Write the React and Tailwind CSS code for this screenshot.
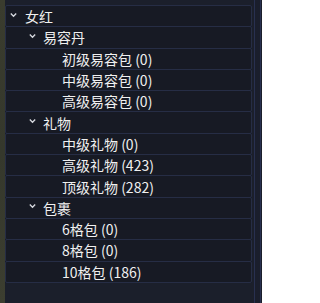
import React from "react";

const rows = [
  { level: 0, label: "女红" },
  { level: 1, label: "易容丹" },
  { level: 2, label: "初级易容包 (0)" },
  { level: 2, label: "中级易容包 (0)" },
  { level: 2, label: "高级易容包 (0)" },
  { level: 1, label: "礼物" },
  { level: 2, label: "中级礼物 (0)" },
  { level: 2, label: "高级礼物 (423)" },
  { level: 2, label: "顶级礼物 (282)" },
  { level: 1, label: "包裹" },
  { level: 2, label: "6格包 (0)" },
  { level: 2, label: "8格包 (0)" },
  { level: 2, label: "10格包 (186)" },
];

function Chevron() {
  return (
    <svg width="7" height="6" viewBox="0 0 7 6" className="shrink-0 -mt-[3px]">
      <path d="M0.8 1.5 L3.5 4.3 L6.2 1.5" fill="none" stroke="#d8dae0" strokeWidth="1.3" />
    </svg>
  );
}

export default function App() {
  return (
    <div
      className="w-[262px] h-[303px] flex bg-[#1b1f2b] overflow-hidden"
      style={{ fontFamily: '"Noto Sans CJK SC", "Noto Sans", sans-serif' }}
    >
      <div className="w-[5px] h-full bg-gradient-to-b from-[#3a3c2e] via-[#35382c] to-[#3c3e30]" />
      <div className="flex-1 flex flex-col pt-[5px] pr-[2px]">
        {rows.map((r, i) => (
          <div
            key={i}
            className="h-[22.3px] flex items-center border border-[#262d45] rounded-[2px] bg-[#171a24] -mt-px first:mt-0 text-[14px] text-[#f0f0f0] leading-none"
          >
            {r.level === 0 && (
              <div className="flex items-center pl-[4px] gap-[8px]">
                <Chevron />
                <span>{r.label}</span>
              </div>
            )}
            {r.level === 1 && (
              <div className="flex items-center pl-[23px] gap-[7px]">
                <Chevron />
                <span>{r.label}</span>
              </div>
            )}
            {r.level === 2 && <span className="pl-[56px]">{r.label}</span>}
          </div>
        ))}
      </div>
      <div className="w-[8px] h-full flex pr-[1px]">
        <div className="flex-1 border-x border-[#283050] bg-[#1a1e2c]" />
      </div>
    </div>
  );
}
